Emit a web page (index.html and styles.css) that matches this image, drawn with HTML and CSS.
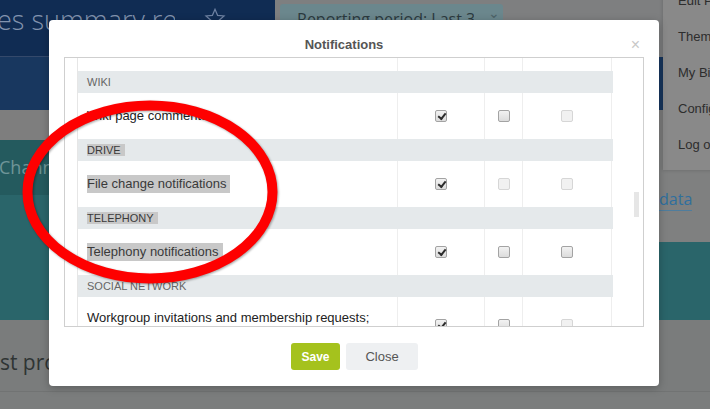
FILE: index.html
```html
<!DOCTYPE html>
<html>
  <head>
    <meta charset="UTF-8">
    <title>Notifications</title>
    <link rel="stylesheet" href="styles.css">
  </head>
  <body>
  <div class="page">
    <div class="top">
      <div class="brand">
        <span class="brand-title">es summary report</span>
        <svg class="star" width="22" height="22" viewBox="0 0 24 24"><path d="M12 2.5l2.8 6.6 7.1.6-5.4 4.7 1.6 7-6.1-3.7-6.1 3.7 1.6-7-5.4-4.7 7.1-.6z" fill="none" stroke="#6f82a3" stroke-width="1.3"/></svg>
      </div>
      <div class="tools">
        <div class="period"><span class="period-text">Reporting period: Last 30 days</span><span class="caret">&#8964;</span></div>
      </div>
    </div>
    <div class="navband"></div>
    <div class="gap"></div>
    <div class="mid">
      <div class="mid-left">
        <div class="channels">Channels</div>
      </div>
      <div class="mid-right">
        <div class="side-card"><span class="link">data</span></div>
      </div>
    </div>
    <div class="bottom">
      <div class="bottom-title">Latest products</div>
    </div>

    <div class="usermenu">
      <div class="um-item">Edit Profile</div>
      <div class="um-item">Themes</div>
      <div class="um-item">My Bitrix24</div>
      <div class="um-item">Configure</div>
      <div class="um-item">Log out</div>
    </div>

    <div class="modal">
      <div class="modal-head">
        <span class="modal-title">Notifications</span>
        <span class="modal-close">&times;</span>
      </div>
      <div class="modal-body">
        <div class="ntable">
          <div class="nrow">
            <div class="ncell label">Wiki page changes</div>
            <div class="ncell"><span class="cb on"></span></div>
            <div class="ncell"><span class="cb"></span></div>
            <div class="ncell"><span class="cb off"></span></div>
          </div>
          <div class="nhead">WIKI</div>
          <div class="nrow">
            <div class="ncell label">Wiki page comments</div>
            <div class="ncell"><span class="cb on"></span></div>
            <div class="ncell"><span class="cb"></span></div>
            <div class="ncell"><span class="cb off"></span></div>
          </div>
          <div class="nhead"><span class="sel">DRIVE</span></div>
          <div class="nrow">
            <div class="ncell label"><span class="sel">File change notifications</span></div>
            <div class="ncell"><span class="cb on"></span></div>
            <div class="ncell"><span class="cb off"></span></div>
            <div class="ncell"><span class="cb off"></span></div>
          </div>
          <div class="nhead"><span class="sel">TELEPHONY</span></div>
          <div class="nrow">
            <div class="ncell label"><span class="sel">Telephony notifications</span></div>
            <div class="ncell"><span class="cb on"></span></div>
            <div class="ncell"><span class="cb"></span></div>
            <div class="ncell"><span class="cb"></span></div>
          </div>
          <div class="nhead">SOCIAL NETWORK</div>
          <div class="nrow tall">
            <div class="ncell label">Workgroup invitations and membership requests; workgroup changes</div>
            <div class="ncell"><span class="cb on"></span></div>
            <div class="ncell"><span class="cb"></span></div>
            <div class="ncell"><span class="cb off"></span></div>
          </div>
        </div>
        <div class="thumb"></div>
      </div>
      <div class="modal-foot">
        <button class="btn save">Save</button>
        <button class="btn close">Close</button>
      </div>
    </div>

    <svg class="ring" width="710" height="409" viewBox="0 0 710 409">
      <ellipse cx="150" cy="192" rx="122.5" ry="86.5" fill="none" stroke="#fe0000" stroke-width="10"/>
    </svg>
  </div>
  </body>
</html>
```

FILE: styles.css
```css
body {
  margin: 0;
  background-color: #7b7d7d;
  font-family: "Liberation Sans", Arial, sans-serif;
}
.page {
  position: relative;
  width: 710px;
  height: 409px;
  overflow: hidden;
}

/* dimmed page behind the dialog */
.top { display: flex; height: 57px; }
.brand {
  width: 275px;
  background-color: #102c53;
  border-bottom: 1px solid #34496b;
  box-sizing: border-box;
  display: flex;
  align-items: center;
  overflow: hidden;
  white-space: nowrap;
}
.brand-title {
  font-family: "Open Sans", sans-serif;
  font-size: 27px;
  font-weight: 300;
  color: #8293ae;
  margin-left: -3px;
  width: 178px;
  overflow: hidden;
  margin-top: -18px;
}
.star { margin-left: 29px; margin-top: -20px; }
.tools {
  flex: 1;
  background-color: #7e7f80;
  padding: 4px 0 0 5px;
}
.period {
  width: 223px;
  height: 36px;
  box-sizing: border-box;
  background-color: #6b878d;
  border-radius: 3px;
  padding: 4px 0 0 17px;
  font-family: "Open Sans", sans-serif;
  font-size: 16px;
  color: #2b3a3f;
  white-space: nowrap;
  display: flex;
}
.period-text { width: 177px; overflow: hidden; }
.caret { margin-left: 14px; margin-top: -5px; color: #4d6368; font-size: 14px; }
.navband { height: 53px; background-color: #18375f; }
.gap { height: 30px; background-color: #7e7e7e; }
.mid { display: flex; height: 180px; background-color: #2a656a; }
.mid-left { flex: 1; }
.channels {
  height: 55px;
  background-color: #245a5e;
  font-family: "Open Sans", sans-serif;
  font-size: 18px;
  color: #6f9598;
  line-height: 55px;
  margin-left: -1px;
}
.mid-right { width: 52px; }
.side-card {
  height: 102px;
  background-color: #7f8080;
  padding-top: 48px;
  box-sizing: border-box;
}
.link {
  font-family: "Open Sans", sans-serif;
  font-size: 16px;
  color: #2f6f9e;
  border-bottom: 1px solid #4f7d9d;
  margin-left: 1px;
}
.bottom {
  height: 72px;
  background-color: #7a7c7c;
  border-bottom: 1px solid #717373;
  box-sizing: border-box;
}
.bottom-title {
  font-family: "Open Sans", sans-serif;
  font-size: 21px;
  color: #2f3434;
  padding-top: 28px;
  margin-left: -42px;
}
.usermenu {
  position: absolute;
  z-index: 2;
  left: 663px;
  top: -17px;
  width: 60px;
  height: 187px;
  background-color: #898989;
  box-shadow: 0 0 4px rgba(0,0,0,.2);
  overflow: hidden;
}
.um-item {
  height: 36px;
  line-height: 36px;
  padding-left: 15px;
  font-size: 13px;
  color: #2d2d2d;
  white-space: nowrap;
}

/* dialog */
.modal {
  position: absolute;
  z-index: 3;
  left: 49px;
  top: 20px;
  width: 610px;
  height: 366px;
  background-color: #fff;
  border-radius: 4px;
  box-shadow: 0 2px 8px rgba(0,0,0,.25);
}
.modal-head {
  height: 37px;
  position: relative;
  text-align: center;
  padding-right: 20px;
}
.modal-title {
  display: inline-block;
  padding-top: 17px;
  font-size: 13px;
  font-weight: bold;
  color: #555;
}
.modal-close {
  position: absolute;
  right: 19px;
  top: 16px;
  font-size: 16px;
  color: #c8c8c8;
}
.modal-body {
  position: relative;
  margin-left: 15px;
  width: 580px;
  height: 270px;
  box-sizing: border-box;
  border: 1px solid #cfcfcf;
  overflow: hidden;
}
.ntable {
  margin: -33px 0 0 12px;
  width: 535px;
  border-left: 1px solid #e6e6e6;
}
.nhead {
  height: 22px;
  line-height: 22px;
  background-color: #e5e9eb;
  padding-left: 9px;
  font-size: 11px;
  color: #666;
}
.nhead .sel { color: #3a3a3a; }
.nrow {
  display: grid;
  grid-template-columns: 320px 87px 38px 89px;
  height: 46px;
}
.nrow.tall { height: 56px; }
.ncell {
  border-right: 1px solid #eeeeee;
  display: flex;
  align-items: center;
  justify-content: center;
}
.ncell.label {
  justify-content: flex-start;
  padding-left: 9px;
  font-size: 13px;
  line-height: 18px;
  color: #222;
}
.nrow.tall .ncell.label { align-items: flex-start; padding-top: 12px; padding-right: 20px; }
.sel { background-color: #c8c8c8; padding-right: 4px; color: #3a3a3a; }
.cb {
  width: 12px;
  height: 12px;
  box-sizing: border-box;
  border: 1px solid #a3a3a3;
  border-radius: 2px;
  background: linear-gradient(#f2f2f2, #dcdcdc);
  position: relative;
}
.cb.off { border-color: #d6d6d6; background: #f1f1f1; }
.cb.on::after {
  content: "";
  position: absolute;
  left: 2px;
  top: 2px;
  width: 6px;
  height: 3px;
  border-left: 2px solid #2c2c2c;
  border-bottom: 2px solid #2c2c2c;
  transform: rotate(-52deg);
}
.thumb {
  position: absolute;
  left: 569px;
  top: 134px;
  width: 5px;
  height: 25px;
  background-color: #e6e6e6;
}
.modal-foot {
  display: flex;
  justify-content: center;
  gap: 6px;
  padding-top: 16px;
  margin-left: 1px;
}
.btn {
  height: 27px;
  border: none;
  border-radius: 3px;
  font-family: "Liberation Sans", Arial, sans-serif;
  font-size: 12px;
  padding: 0;
}
.btn.save { width: 49px; background-color: #a5c21d; color: #fff; font-weight: bold; }
.btn.close { width: 72px; background-color: #eef0f2; color: #555; font-size: 13px; }

.ring {
  position: absolute;
  z-index: 4;
  left: 0;
  top: 0;
  pointer-events: none;
  filter: drop-shadow(1px 1px 1px rgba(0,0,0,.35));
}
```
